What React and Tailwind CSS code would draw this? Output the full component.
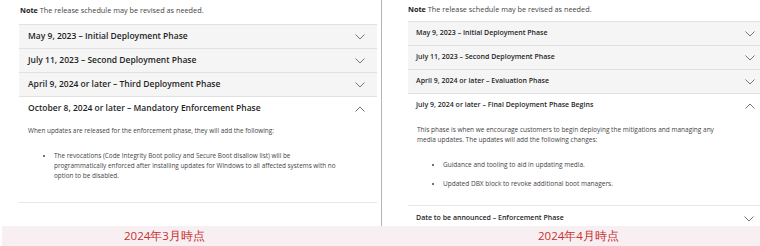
import React from "react";

const font = { fontFamily: '"Open Sans", "Noto Sans", sans-serif' };

function Chevron({ up }) {
  return (
    <svg width="10" height="6" viewBox="0 0 10 6" className="text-[#666]">
      <polyline
        points={up ? "0.5,5.5 5,1 9.5,5.5" : "0.5,0.5 5,5 9.5,0.5"}
        fill="none"
        stroke="currentColor"
        strokeWidth="0.9"
      />
    </svg>
  );
}

function Row({ title, open, className = "" }) {
  return (
    <div
      className={`flex items-center justify-between border-t border-[#e1e1e1] ${
        open ? "bg-white" : "bg-[#f5f5f5]"
      } ${className}`}
    >
      <span className="font-semibold text-[#1f1f1f]">{title}</span>
      <Chevron up={open} />
    </div>
  );
}

function LeftPanel() {
  const rows = [
    "May 9, 2023 – Initial Deployment Phase",
    "July 11, 2023 – Second Deployment Phase",
    "April 9, 2024 or later – Third Deployment Phase",
  ];
  return (
    <div className="w-[381px] h-[226px] overflow-hidden">
      <p className="pl-[20px] pt-[5px] text-[7.3px] leading-[10px] text-[#444]">
        <span className="font-bold text-[#222]">Note</span> The release schedule may be revised as
        needed.
      </p>
      <div className="ml-[19px] mr-[4px] mt-[9px] text-[8.5px]">
        {rows.map((r) => (
          <Row key={r} title={r} className="h-[24px] pl-[9px] pr-[12px]" />
        ))}
        <Row
          title="October 8, 2024 or later – Mandatory Enforcement Phase"
          open
          className="h-[24px] pl-[9px] pr-[12px]"
        />
        <div className="pl-[9px] pt-[6px] pb-[21px] border-b border-[#e6e6e6] text-[6.4px] leading-[10px] text-[#444]">
          <p>When updates are released for the enforcement phase, they will add the following:</p>
          <ul className="mt-[15px] pl-[26px] list-disc">
            <li>
              The revocations (Code Integrity Boot policy and Secure Boot disallow list) will be
              <br />
              programmatically enforced after installing updates for Windows to all affected systems
              with no
              <br />
              option to be disabled.
            </li>
          </ul>
        </div>
      </div>
    </div>
  );
}

function RightPanel() {
  const rows = [
    "May 9, 2023 – Initial Deployment Phase",
    "July 11, 2023 – Second Deployment Phase",
    "April 9, 2024 or later – Evaluation Phase",
  ];
  return (
    <div className="flex-1 h-[226px] overflow-hidden">
      <p className="pl-[26px] pt-[4px] text-[7.3px] leading-[10px] text-[#444]">
        <span className="font-bold text-[#222]">Note</span> The release schedule may be revised as
        needed.
      </p>
      <div className="ml-[26px] mt-[7px] text-[7px]">
        {rows.map((r) => (
          <Row key={r} title={r} className="h-[24px] pl-[8px] pr-[5px]" />
        ))}
        <Row
          title="July 9, 2024 or later – Final Deployment Phase Begins"
          open
          className="h-[24px] pl-[8px] pr-[5px]"
        />
        <div className="pl-[9px] pt-[8px] pb-[16px] border-b border-[#e6e6e6] text-[6.5px] leading-[9.5px] text-[#444]">
          <p className="pr-[40px]">
            This phase is when we encourage customers to begin deploying the mitigations and managing
            any media updates. The updates will add the following changes:
          </p>
          <ul className="mt-[16px] pl-[26px] list-disc flex flex-col gap-[9.5px]">
            <li>Guidance and tooling to aid in updating media.</li>
            <li>Updated DBX block to revoke additional boot managers.</li>
          </ul>
        </div>
        <div className="h-[24px] pl-[8px] pr-[6px] pt-[2px] flex items-center justify-between bg-white">
          <span className="font-semibold text-[#1f1f1f]">Date to be announced – Enforcement Phase</span>
          <Chevron />
        </div>
      </div>
    </div>
  );
}

export default function App() {
  return (
    <div className="w-[760px] h-[246px] bg-white flex flex-col overflow-hidden" style={font}>
      <div className="flex h-[226px]">
        <LeftPanel />
        <div className="w-px bg-[#b4b4b4]" />
        <RightPanel />
      </div>
      <div className="flex-1 ml-[2px] bg-[#f8eff3] flex items-center text-[11.5px] text-[#c8302c]">
        <div className="w-[379px] pl-[122px]">2024年3月時点</div>
        <div className="flex-1 pl-[157px]">2024年4月時点</div>
      </div>
    </div>
  );
}
